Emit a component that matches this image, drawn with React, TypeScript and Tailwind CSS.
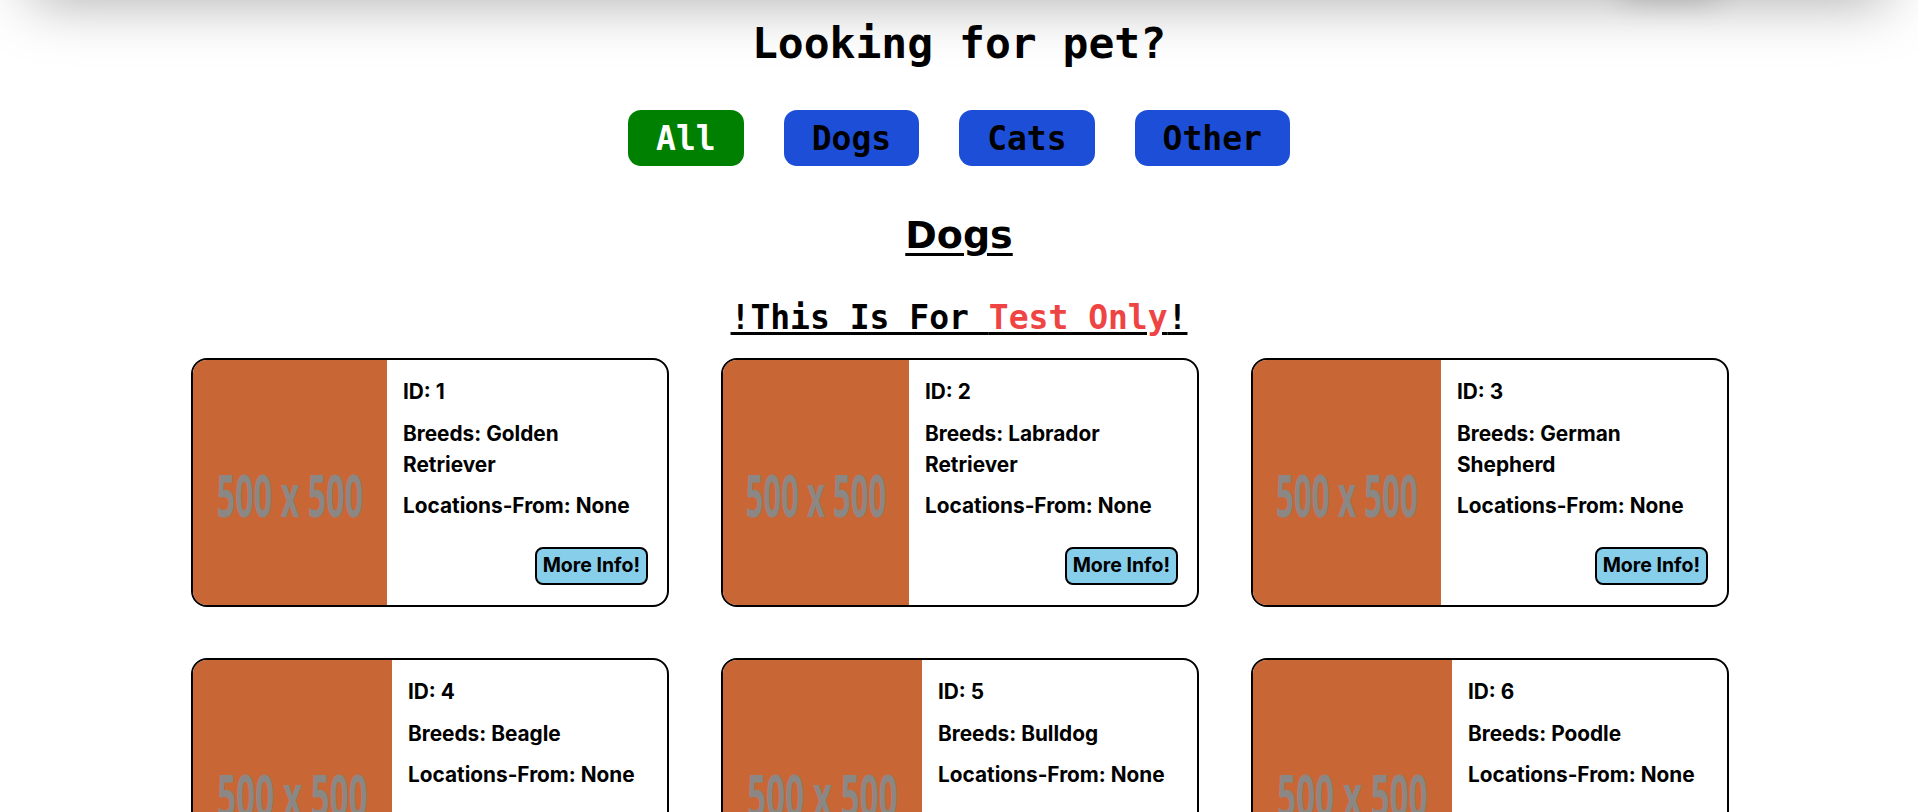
import React from "react";

const pets = [
  { id: 1, breed: "Golden Retriever", img: "w-[194px]" },
  { id: 2, breed: "Labrador Retriever", img: "w-[186px]" },
  { id: 3, breed: "German Shepherd", img: "w-[188px]" },
  { id: 4, breed: "Beagle", img: "w-[199px]" },
  { id: 5, breed: "Bulldog", img: "w-[199px]" },
  { id: 6, breed: "Poodle", img: "w-[199px]" },
];

function Placeholder({ cls }: { cls: string }) {
  return (
    <div className={`${cls} h-[245px] shrink-0 bg-[#c96636]`}>
      <svg viewBox="0 0 500 500" preserveAspectRatio="none" className="block h-full w-full">
        <text
          x="250"
          y="320"
          textAnchor="middle"
          textLength="378"
          lengthAdjust="spacingAndGlyphs"
          fontFamily="'Noto Sans', sans-serif"
          fontWeight="700"
          fontSize="122"
          fill="#8a8784"
        >
          500 x 500
        </text>
      </svg>
    </div>
  );
}

function Card({ id, breed, img }: { id: number; breed: string; img: string }) {
  return (
    <div className="flex overflow-hidden rounded-2xl border-2 border-black bg-white">
      <Placeholder cls={img} />
      <div className="flex flex-1 flex-col pl-4 pr-[19px] pt-4 font-['Inter',sans-serif] text-[20.8px] font-bold leading-[31.2px] text-black">
        <p>ID: {id}</p>
        <p className="mt-[10.4px]">Breeds: {breed}</p>
        <p className="mt-[10.4px]">Locations-From: None</p>
        <button className="mt-[25.4px] h-[38px] self-end rounded-lg border-2 border-black bg-[#87ceeb] px-[6px] text-[19.5px] font-bold leading-none text-black">
          More Info!
        </button>
      </div>
    </div>
  );
}

export default function App() {
  const mono = "font-['DejaVu_Sans_Mono',monospace]";
  return (
    <div className="relative min-h-[812px] overflow-hidden bg-white text-black">
      <div className="pointer-events-none absolute left-[30px] right-[30px] top-[-60px] h-[60px] bg-white shadow-[0_0_60px_rgba(0,0,0,0.35)]" />
      <div className="pointer-events-none absolute left-[1620px] top-[-30px] h-[30px] w-[100px] rounded-full bg-white shadow-[0_0_30px_rgba(0,0,0,0.18)]" />

      <div className="relative flex flex-col items-center">
        <h1 className={`${mono} mt-[18px] text-[43px] font-bold leading-[50px]`}>
          Looking for pet?
        </h1>

        <div className={`${mono} mt-[42px] flex justify-center gap-10 text-[33px] font-bold`}>
          <button className="h-14 rounded-[13px] bg-[#008000] px-7 leading-none text-white">All</button>
          <button className="h-14 rounded-[13px] bg-[#1d4ed8] px-7 leading-none text-black">Dogs</button>
          <button className="h-14 rounded-[13px] bg-[#1d4ed8] px-7 leading-none text-black">Cats</button>
          <button className="h-14 rounded-[13px] bg-[#1d4ed8] px-7 leading-none text-black">Other</button>
        </div>

        <h2 className="mt-[47px] font-['DejaVu_Sans',sans-serif] text-[38px] font-bold leading-[44px] underline decoration-[3px] underline-offset-[5px]">
          Dogs
        </h2>

        <h3 className={`${mono} mt-[42px] text-[33px] font-bold leading-[38px] underline decoration-[2.5px] underline-offset-[3px]`}>
          !This Is For <span className="text-[#ef4444]">Test Only</span>!
        </h3>

        <div className="ml-[2px] mt-[21px] grid w-[1538px] grid-cols-3 gap-x-[52px] gap-y-[51px]">
          {pets.map((p) => (
            <Card key={p.id} {...p} />
          ))}
        </div>
      </div>
    </div>
  );
}
